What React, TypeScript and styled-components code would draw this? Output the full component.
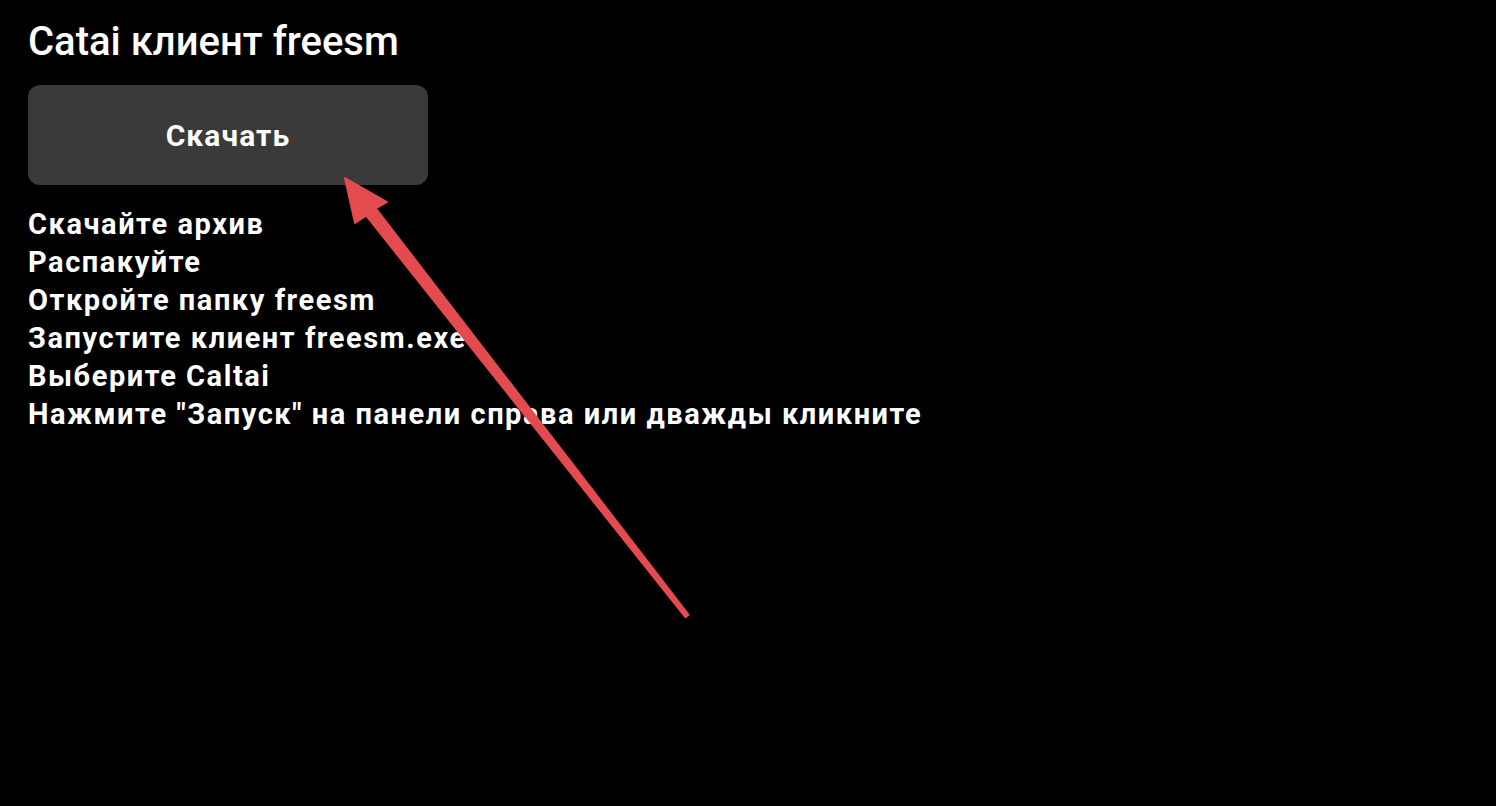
import React from 'react'
import styled, { createGlobalStyle } from 'styled-components'

const GlobalStyle = createGlobalStyle`
  html, body {
    margin: 0;
    padding: 0;
    background: #000;
  }
  body {
    font-family: Roboto, 'Noto Sans', sans-serif;
    color: #fff;
  }
`

const Page = styled.div`
  position: relative;
  min-height: 806px;
  padding: 20px 28px;
  box-sizing: border-box;
`

const Title = styled.h1`
  font-size: 40px;
  font-weight: 500;
  line-height: 44px;
  margin: 0 0 21px;
`

const DownloadButton = styled.button`
  display: flex;
  align-items: center;
  justify-content: center;
  width: 400px;
  height: 100px;
  border: none;
  border-radius: 12px;
  background: #3a3a3a;
  color: #fff;
  font-family: inherit;
  font-size: 30px;
  font-weight: 700;
  letter-spacing: 1.1px;
  cursor: pointer;
`

const Steps = styled.div`
  display: flex;
  flex-direction: column;
  margin-top: 20px;
`

const Step = styled.div`
  font-size: 29px;
  font-weight: 700;
  line-height: 38px;
  letter-spacing: 1.55px;
`

const Annotation = styled.svg`
  position: absolute;
  left: 0;
  top: 0;
  pointer-events: none;
`

const steps = [
  'Скачайте архив',
  'Распакуйте',
  'Откройте папку freesm',
  'Запустите клиент freesm.exe',
  'Выберите Caltai',
  'Нажмите "Запуск" на панели справа или дважды кликните',
]

export default function App() {
  return (
    <Page>
      <GlobalStyle />
      <Title>Catai клиент freesm</Title>
      <DownloadButton>Скачать</DownloadButton>
      <Steps>
        {steps.map((s) => (
          <Step key={s}>{s}</Step>
        ))}
      </Steps>
      <Annotation width="1496" height="806" viewBox="0 0 1496 806">
        <polygon
          points="688.6,614.8 375.7,208.3 387,202 345,178 355,223 366.3,215.7 685.4,617.2"
          fill="#e44b4f"
          stroke="#e44b4f"
          strokeWidth="2"
          strokeLinejoin="round"
        />
      </Annotation>
    </Page>
  )
}
